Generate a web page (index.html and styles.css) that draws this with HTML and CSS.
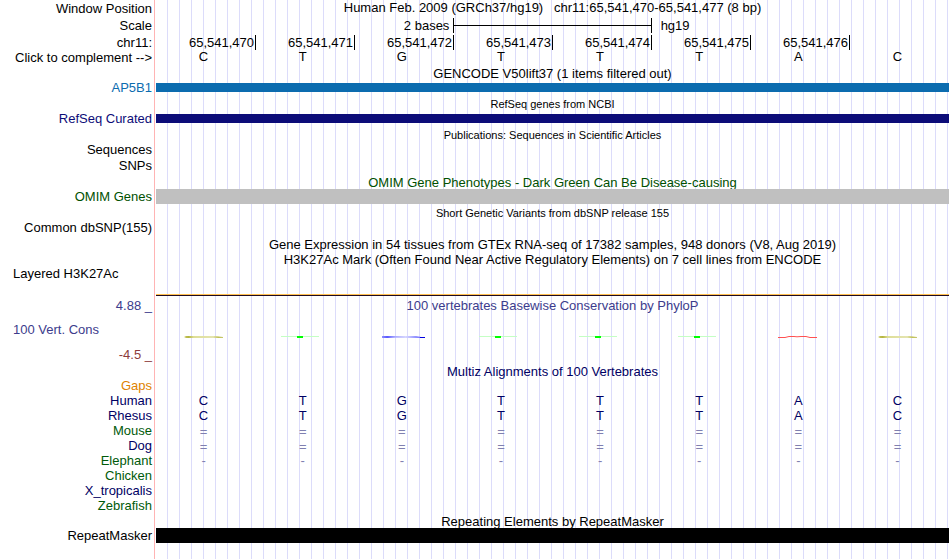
FILE: index.html
```html
<!DOCTYPE html>
<html lang="en">
<head>
<meta charset="utf-8">
<title>Genome browser chr11:65,541,470-65,541,477</title>
<link rel="stylesheet" href="styles.css">
</head>
<body>
<svg class="defs" aria-hidden="true">
  <defs>
    <linearGradient id="olive"><stop offset="0" stop-color="#c8c860"/><stop offset=".12" stop-color="#b4b440"/><stop offset=".25" stop-color="#dede98"/><stop offset=".75" stop-color="#e4e4b0"/><stop offset=".88" stop-color="#c0c058"/><stop offset="1" stop-color="#c8c870"/></linearGradient>
    <linearGradient id="blue"><stop offset="0" stop-color="#9090ff"/><stop offset=".12" stop-color="#5858ff"/><stop offset=".3" stop-color="#a8a8ff"/><stop offset=".55" stop-color="#d8d8ff"/><stop offset=".85" stop-color="#8080ff"/><stop offset="1" stop-color="#0000f0"/></linearGradient>
    <g id="c"><path fill="url(#olive)" d="M2 1L4 0H33L41 1V2H4Z"/></g>
    <g id="t" shape-rendering="crispEdges"><path fill="#c4ffc4" d="M0 0H38V1H0Z"/><path fill="#00ff00" d="M16 0H22V2H16Z"/></g>
    <g id="g"><path fill="url(#blue)" d="M2 0H36L41 1H45V2H24L16 1.7L8 2H2Z"/><path fill="#0000e0" d="M40 1H45V2H40Z"/></g>
    <g id="a"><path fill="none" stroke="#ff5050" d="M1 1.5H8L12 .5H17L20 .8L24 .5H29L33 1.5H40"/></g>
  </defs>
</svg>
<main class="browser">
  <div class="row h17"><span class="label low">Window Position</span><div class="track"><h1 class="title">Human Feb. 2009 (GRCh37/hg19) &nbsp; chr11:65,541,470-65,541,477 (8 bp)</h1></div></div>
  <div class="row h17"><span class="label low">Scale</span><div class="track bases scale"><span class="scale-size">2 bases</span><span class="scale-bar"></span><span class="scale-db">hg19</span></div></div>
  <div class="row h15"><span class="label low">chr11:</span><div class="track bases ruler"><span>65,541,470</span><span>65,541,471</span><span>65,541,472</span><span>65,541,473</span><span>65,541,474</span><span>65,541,475</span><span>65,541,476</span></div></div>
  <div class="row h17"><span class="label low">Click to complement --&gt;</span><div class="track bases"><span>C</span><span>T</span><span>G</span><span>T</span><span>T</span><span>T</span><span>A</span><span>C</span></div></div>
  <div class="row h14"><div class="track"><h2 class="title">GENCODE V50lift37 (1 items filtered out)</h2></div></div>
  <div class="row h16 sky"><span class="label">AP5B1</span><div class="track"><div class="bar thin"></div></div></div>
  <div class="row h15"><div class="track"><h2 class="title small low">RefSeq genes from NCBI</h2></div></div>
  <div class="row h16 indigo"><span class="label">RefSeq Curated</span><div class="track"><div class="bar thin"></div></div></div>
  <div class="row h15"><div class="track"><h2 class="title small low">Publications: Sequences in Scientific Articles</h2></div></div>
  <div class="row h16"><span class="label">Sequences</span></div>
  <div class="row h17"><span class="label">SNPs</span></div>
  <div class="row h14 green"><div class="track"><h2 class="title">OMIM Gene Phenotypes - Dark Green Can Be Disease-causing</h2></div></div>
  <div class="row h16 green"><span class="label">OMIM Genes</span><div class="track"><div class="bar gray"></div></div></div>
  <div class="row h15"><div class="track"><h2 class="title small low">Short Genetic Variants from dbSNP release 155</h2></div></div>
  <div class="row h17"><span class="label">Common dbSNP(155)</span></div>
  <div class="row h15"><div class="track"><h2 class="title">Gene Expression in 54 tissues from GTEx RNA-seq of 17382 samples, 948 donors (V8, Aug 2019)</h2></div></div>
  <div class="row h14"><div class="track"><h2 class="title">H3K27Ac Mark (Often Found Near Active Regulatory Elements) on 7 cell lines from ENCODE</h2></div></div>
  <div class="row h28"><span class="label start">Layered H3K27Ac</span></div>
  <div class="row h4"><div class="track"><div class="signal"></div></div></div>
  <div class="row h24 violet"><span class="label">4.88 _</span><div class="track"><h2 class="title">100 vertebrates Basewise Conservation by PhyloP</h2></div></div>
  <div class="row h25 violet"><span class="label start">100 Vert. Cons</span>
    <div class="track bases logo">
      <svg class="glyph"><use href="#c"/></svg><svg class="glyph"><use href="#t"/></svg><svg class="glyph"><use href="#g"/></svg><svg class="glyph"><use href="#t"/></svg><svg class="glyph"><use href="#t"/></svg><svg class="glyph"><use href="#t"/></svg><svg class="glyph"><use href="#a"/></svg><svg class="glyph"><use href="#c"/></svg>
    </div>
  </div>
  <div class="row h17 maroon"><span class="label">-4.5 _</span></div>
  <div class="row h14 navy"><div class="track"><h2 class="title">Multiz Alignments of 100 Vertebrates</h2></div></div>
  <div class="row h15 orange"><span class="label">Gaps</span></div>
  <div class="row h15 navy"><span class="label">Human</span><div class="track bases"><span>C</span><span>T</span><span>G</span><span>T</span><span>T</span><span>T</span><span>A</span><span>C</span></div></div>
  <div class="row h15 navy"><span class="label">Rhesus</span><div class="track bases"><span>C</span><span>T</span><span>G</span><span>T</span><span>T</span><span>T</span><span>A</span><span>C</span></div></div>
  <div class="row h15 leaf"><span class="label">Mouse</span><div class="track bases faint low"><span>=</span><span>=</span><span>=</span><span>=</span><span>=</span><span>=</span><span>=</span><span>=</span></div></div>
  <div class="row h15 navy"><span class="label">Dog</span><div class="track bases faint low"><span>=</span><span>=</span><span>=</span><span>=</span><span>=</span><span>=</span><span>=</span><span>=</span></div></div>
  <div class="row h15 leaf"><span class="label">Elephant</span><div class="track bases faint"><span>-</span><span>-</span><span>-</span><span>-</span><span>-</span><span>-</span><span>-</span><span>-</span></div></div>
  <div class="row h15 leaf"><span class="label">Chicken</span></div>
  <div class="row h15 navy"><span class="label">X_tropicalis</span></div>
  <div class="row h15 leaf"><span class="label">Zebrafish</span></div>
  <div class="row h15"><div class="track"><h2 class="title low">Repeating Elements by RepeatMasker</h2></div></div>
  <div class="row h15"><span class="label">RepeatMasker</span><div class="track"><div class="bar black"></div></div></div>
</main>
</body>
</html>
```
FILE: styles.css
```css
* { box-sizing: border-box; }
body {
  margin: 0;
  background: #fff;
  color: #000;
  font: 13px/15px "Liberation Sans", Arial, sans-serif;
}
.defs { position: absolute; width: 0; height: 0; }

/* Label column, divider, and the guide lines behind every track */
.browser {
  min-height: 100vh;
  margin-right: 1px;
  background:
    linear-gradient(#ffb4b4, #ffb4b4) 154px 0 / 1px 100% no-repeat,
    repeating-linear-gradient(to right, transparent 0 11px, #dcdcfa 11px 12px) 156px 0 no-repeat;
}
.row {
  display: grid;
  grid-template-columns: 152px minmax(0, 1fr);
  column-gap: 4px;
  white-space: nowrap;
}
.h4 { height: 4px; }
.h14 { height: 14px; }
.h15 { height: 15px; }
.h16 { height: 16px; }
.h17 { height: 17px; }
.h24 { height: 24px; }
.h25 { height: 25px; }
.h28 { height: 28px; }

.label { grid-column: 1; text-align: right; }
.label.start { padding-left: 13px; text-align: left; }
.low { padding-top: 1px; }
.track { grid-column: 2; }
.title { margin: 0; font-size: 13px; font-weight: 400; text-align: center; }
.title.small { font-size: 11px; }

/* One column per base */
.bases { display: grid; grid-template-columns: repeat(8, minmax(0, 1fr)); }
.bases > span { padding-right: 4px; text-align: center; }
.faint { color: #8080b0; }

.scale, .ruler { padding-top: 1px; }
.ruler { margin-left: 1px; }
.bases > .scale-size { grid-column: span 3; text-align: right; }
.scale-bar {
  grid-column: span 2;
  height: 15px;
  border: solid #000;
  border-width: 0 1px;
  background: linear-gradient(#000, #000) 0 7px / 100% 1px no-repeat;
}
.bases > .scale-db { padding: 0 0 0 9px; text-align: left; }
.ruler > span {
  height: 15px;
  padding-right: 1px;
  border-right: 1px solid #000;
  text-align: right;
}

.bar { height: 15px; background: currentColor; }
.bar.thin { height: 9px; margin-top: 3px; }
.bar.gray { background: #c0c0c0; }
.bar.black { background: #000; }
.signal { height: 2px; border-top: 1px solid #ffc050; background: #200c20; }
.logo { padding-top: 14px; }
.glyph { display: block; width: 46px; height: 2px; margin-left: 26px; }

.sky { color: #0c6caf; }
.indigo { color: #0c0c78; }
.green { color: #005000; }
.leaf { color: #005a0a; }
.navy { color: #000064; }
.violet { color: #3c3c8c; }
.maroon { color: #8c3c3c; }
.orange { color: #e08200; }
```
